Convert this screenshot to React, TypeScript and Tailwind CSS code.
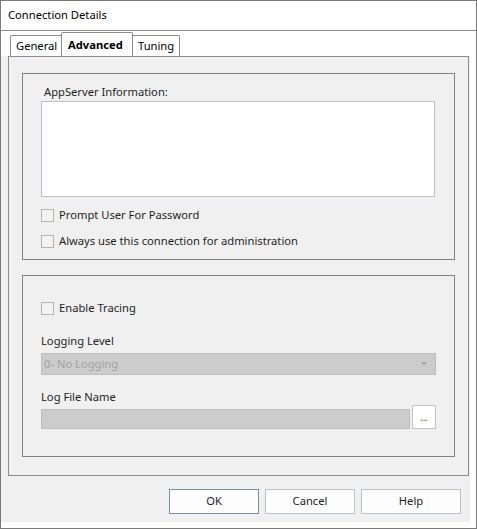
import React from "react";

function Check({ label }: { label: string }) {
  return (
    <div className="flex items-center h-[16px]">
      <div className="w-[13px] h-[13px] border border-[#b4b4b4] bg-[#f3f3f3] shrink-0" />
      <span className="ml-[5px] text-[#1f1f1f] leading-[16px]">{label}</span>
    </div>
  );
}

function Btn({ children, w, primary }: { children: React.ReactNode; w: string; primary?: boolean }) {
  return (
    <button
      type="button"
      className={
        "h-[25px] bg-[#fdfdfd] text-[#1f1f1f] border " +
        w +
        (primary ? " border-[#7f8fa3]" : " border-[#b9c3ce]")
      }
    >
      {children}
    </button>
  );
}

export default function App() {
  return (
    <div className="w-[477px] h-[529px] border border-[#7a7a7a] bg-white flex flex-col font-['Noto_Sans',sans-serif] text-[11.2px] text-black">
      <div className="h-[30px] shrink-0 border-b border-[#8c8c8c] pl-[7px] flex items-center">Connection Details</div>
      <div className="flex-1 pr-[6px] pb-[6px]">
        <div className="h-full bg-[#f0f0f0] flex flex-col">
          {/* tabs */}
          <div className="h-[25px] flex items-end pl-[9px] bg-white">
            <div className="w-[52px] h-[21px] border border-b-0 border-[#8c8c8c] rounded-t-[2px] bg-white pl-[5px] leading-[20px]">General</div>
            <div className="-ml-px w-[72px] h-[24px] border border-b-0 border-[#8c8c8c] rounded-t-[2px] bg-white pl-[6px] font-bold leading-[23px] z-10">Advanced</div>
            <div className="-ml-px w-[48px] h-[21px] border border-b-0 border-[#8c8c8c] rounded-t-[2px] bg-white pl-[5px] leading-[20px]">Tuning</div>
          </div>
          <div className="ml-[7px] mr-[1px] h-[420px] border border-[#8c8c8c] bg-[#f0f0f0] pt-[16px] px-[13px]">
            {/* group 1 */}
            <div className="h-[187px] border border-[#828282] pt-[10px] pl-[18px] pr-[19px]">
              <div className="ml-[3px] leading-[16px] h-[16px] text-[#1f1f1f]">AppServer Information:</div>
              <div className="mt-[1px] h-[96px] border border-[#b7c0cc] bg-white" />
              <div className="mt-[10px]"><Check label="Prompt User For Password" /></div>
              <div className="mt-[10px]"><Check label="Always use this connection for administration" /></div>
            </div>
            {/* group 2 */}
            <div className="mt-[15px] h-[182px] border border-[#828282] pt-[24px] pl-[18px] pr-[18px]">
              <Check label="Enable Tracing" />
              <div className="mt-[17px] leading-[16px] h-[16px] text-[#1f1f1f]">Logging Level</div>
              <div className="mt-[4px] h-[22px] border border-[#bebebe] bg-[#cccccc] flex items-center pl-[2px] pr-[8px] justify-between">
                <span className="text-[#a2a2a2]">0- No Logging</span>
                <svg width="6" height="4" viewBox="0 0 6 4"><path d="M0 0h6L3 3.5z" fill="#a8a8a8" /></svg>
              </div>
              <div className="mt-[14px] leading-[16px] h-[16px] text-[#1f1f1f]">Log File Name</div>
              <div className="flex items-end">
                <div className="flex-1 h-[20px] border border-[#bebebe] bg-[#cccccc]" />
                <div className="ml-[2px] w-[24px] h-[24px] border border-[#b9c3ce] bg-white flex items-center justify-center text-[#555] text-[10px] leading-none pb-[1px]">...</div>
              </div>
            </div>
          </div>
          {/* buttons */}
          <div className="mt-[13px] flex justify-end gap-[6px] pr-[9px]">
            <Btn w="w-[90px]" primary>OK</Btn>
            <Btn w="w-[90px]">Cancel</Btn>
            <Btn w="w-[100px]">Help</Btn>
          </div>
        </div>
      </div>
    </div>
  );
}
